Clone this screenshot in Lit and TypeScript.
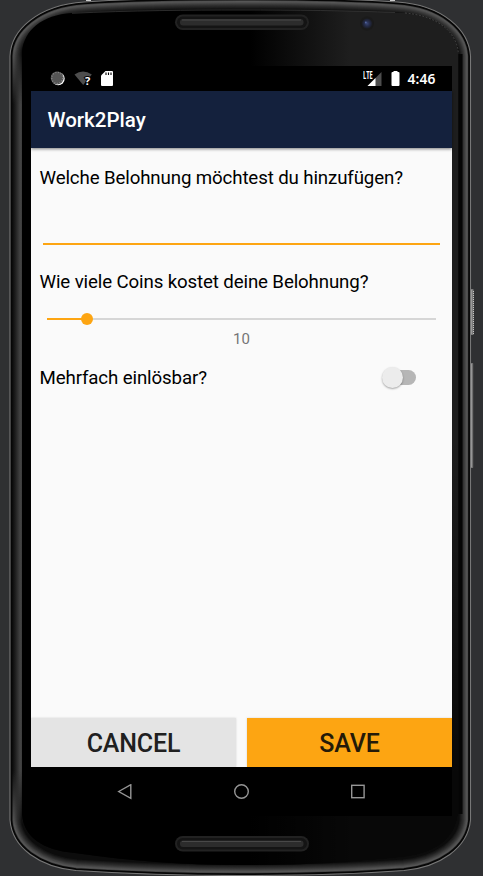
import { LitElement, html, svg, css } from "lit";
import { customElement, property } from "lit/decorators.js";

const OUTER =
  "M10 56C11 30 38 5 84 2C135 -1.5 190 -2 241 -2S346 -1.5 397 2C443 5 469 30 470.500 56V820C468 848 440 867 404 870.500C350 874.500 300 875.500 241 875.500S130 874 76 870.500C40 867 12 848 10 820Z";
const INNER =
  "M22 52C24 30 42 15 72 13C130 10.500 190 10 241 10S350 10 405 13C438 16 457 32 458.500 54V812C456 838 437 853 405 857C350 863 300 865 241 865S130 861 75 853C42 850 24 837 22 814Z";

// Bezel shading, from the inner rim outwards: stroke width and colour.
const BANDS: [number, string][] = [
  [22, "#151515"],
  [20, "#1e1e1e"],
  [18, "#262626"],
  [16, "#2e2e2e"],
  [14, "#383838"],
  [12, "#434343"],
  [10, "#4e4e4e"],
  [8, "#565656"],
  [6, "#444"],
  [4.6, "#060606"],
];

@customElement("device-frame")
class DeviceFrame extends LitElement {
  static styles = css`
    :host { display: block; }
    svg { display: block; width: 483px; height: 876px; }
  `;
  render() {
    const grille = (y: number) => svg`
      <rect x="175" y=${y} width="134" height="15.500" rx="7.700" fill="#222"/>
      <rect x="177" y=${y + 2} width="130" height="11.500" rx="5.700" fill="#141414"/>
      <rect x="180" y=${y + 4.5} width="123.500" height="6.500" rx="3" fill="#2c2c2c"/>
      <path d=${`M182 ${y + 5.5}H301`} stroke="#484848" stroke-width="1"/>`;
    return html`<svg viewBox="0 0 483 876">
      <defs>
        <clipPath id="body"><path d=${OUTER}/></clipPath>
        <linearGradient id="left" gradientUnits="userSpaceOnUse" x1="12" y1="0" x2="23" y2="0">
          <stop offset="0" stop-color="#080808"/>
          <stop offset=".3" stop-color="#1e1e1e"/>
          <stop offset=".75" stop-color="#444"/>
          <stop offset="1" stop-color="#363636"/>
        </linearGradient>
        <linearGradient id="ends" x1="0" y1="0" x2="0" y2="1">
          <stop offset="0" stop-color="#fff" stop-opacity="0"/>
          <stop offset=".07" stop-color="#fff"/>
          <stop offset=".93" stop-color="#fff"/>
          <stop offset="1" stop-color="#fff" stop-opacity="0"/>
        </linearGradient>
        <mask id="soft"><rect x="8" y="50" width="20" height="775" fill="url(#ends)"/></mask>
        <linearGradient id="glare" gradientUnits="userSpaceOnUse" x1="250" y1="0" x2="350" y2="0">
          <stop offset="0" stop-color="#1e1e1e" stop-opacity="0"/>
          <stop offset="1" stop-color="#1e1e1e"/>
        </linearGradient>
        <linearGradient id="fade" x1="0" y1="0" x2="0" y2="1">
          <stop offset=".5" stop-color="#000" stop-opacity="0"/>
          <stop offset=".9" stop-color="#000" stop-opacity=".75"/>
        </linearGradient>
        <linearGradient id="metal" x1="0" y1="0" x2="1" y2="0">
          <stop offset="0" stop-color="#aaa"/>
          <stop offset="1" stop-color="#484848"/>
        </linearGradient>
        <radialGradient id="lens">
          <stop offset="0" stop-color="#3a4675"/>
          <stop offset=".5" stop-color="#252c4a"/>
          <stop offset="1" stop-color="#1a1b20"/>
        </radialGradient>
      </defs>
      <rect width="483" height="876" fill="#2f3032"/>
      <path d=${OUTER} fill="#0c0c0c"/>
      <g clip-path="url(#body)" fill="none">
        ${BANDS.map(([w, c]) => svg`<path d=${OUTER} stroke=${c} stroke-width=${w}/>`)}
      </g>
      <rect x="12" y="50" width="11" height="775" fill="url(#left)" mask="url(#soft)"/>
      <path d=${OUTER} fill="none" stroke="#777" stroke-width="1.100"/>
      <path d=${INNER} fill="#000"/>
      <path d=${INNER} fill="url(#glare)"/>
      <path d=${INNER} fill="url(#fade)"/>
      <path d="M72 13.300C130 10.500 190 10 241 10S350 10.500 395 12.500" fill="none" stroke="#3c3c3c" stroke-width=".700"/>
      <path d="M405 13C438 16 457 32 458.500 54" fill="none" stroke="#484848" stroke-width=".800" stroke-dasharray="2 1.500"/>
      <path d="M460.500 54V814" stroke="#050505" stroke-width="4"/>
      <path d="M86 .5H91M390 .5H395" stroke="#ccc"/>
      ${grille(14.5)}${grille(836)}
      <circle cx="367" cy="23.500" r="7" fill="#1a1a1a"/>
      <circle cx="367" cy="23.500" r="5.300" fill="url(#lens)"/>
      <circle cx="365.800" cy="22.500" r=".9" fill="#5365a0"/>
      <rect x="471" y="289" width="3" height="46" rx="1" fill="url(#metal)"/>
      <path d="M473.500 291V334" stroke="#c5c5c5" stroke-dasharray="1 1"/>
      <rect x="471" y="363" width="2.500" height="105" rx="1" fill="url(#metal)"/>
    </svg>`;
  }
}

@customElement("status-bar")
class StatusBar extends LitElement {
  static styles = css`
    :host { display: flex; align-items: center; height: 25px; flex: none; background: #000; color: #fff; box-sizing: border-box; padding: 0 16px 0 18px; }
    svg { display: block; flex: none; }
    .gap { flex: 1; }
    .wifi { margin-left: 8px; }
    .card { margin-left: 8px; }
    .battery { margin: 0 8px 0 8.500px; }
    .time { font: 600 13.800px/25px "Noto Sans", "Open Sans", sans-serif; width: 28.500px; white-space: nowrap; letter-spacing: .1px; }
    .lte { font: 700 10.500px "Open Sans", sans-serif; fill: #fff; }
    .mark { font: 700 11px "Open Sans", sans-serif; fill: #fff; stroke: #000; stroke-width: 2px; paint-order: stroke; }
  `;
  render() {
    return html`
      <svg width="17" height="25" viewBox="0 0 17 25">
        <circle cx="9.200" cy="12.700" r="6.500" fill="#fff"/>
        <circle cx="8.200" cy="11.900" r="6.500" fill="#555"/>
        <circle cx="8.200" cy="11.900" r="5.500" fill="none" stroke="#888" stroke-width="1.300" stroke-dasharray="1 1.600"/>
      </svg>
      <svg class="wifi" width="19" height="25" viewBox="0 0 19 25">
        <path d="M.5 8.500Q9 2.500 17.800 8.500L9.200 19Z" fill="#4d4d4d"/>
        <text class="mark" x="11" y="18.500">?</text>
      </svg>
      <svg class="card" width="13" height="25" viewBox="0 0 13 25">
        <path d="M4.500 5H11Q12 5 12 6V19Q12 20 11 20H1Q0 20 0 19V9.500Z" fill="#fff"/>
        <path d="M5 6.500V9M7.500 6.500V9M10 6.500V9" stroke="#000" stroke-width="1.100"/>
      </svg>
      <span class="gap"></span>
      <svg width="19" height="25" viewBox="0 0 19 25">
        <path d="M4.500 20L18.500 6V20Z" fill="#4d4d4d"/>
        <path d="M4.500 20L12.500 12V20Z" fill="#fff"/>
        <text class="lte" x="0" y="12.500" textLength="9.800" lengthAdjust="spacingAndGlyphs">LTE</text>
      </svg>
      <svg class="battery" width="9" height="25" viewBox="0 0 9 25">
        <path d="M2.500 5H6.500V6H7.500Q8.500 6 8.500 7V19Q8.500 20 7.500 20H1.500Q.5 20 .5 19V7Q.5 6 1.500 6H2.500Z" fill="#fff"/>
      </svg>
      <span class="time">4:46</span>`;
  }
}

@customElement("reward-slider")
class RewardSlider extends LitElement {
  @property({ type: Number }) value = 10;
  static styles = css`
    :host { display: block; }
    .track { display: flex; align-items: center; height: 12px; }
    .done { height: 2px; background: #fda512; }
    .thumb { width: 12px; height: 12px; border-radius: 50%; background: #fda512; margin: 0 -6px; z-index: 1; }
    .rest { flex: 1; height: 2px; background: #d6d6d6; }
    .value { text-align: center; font: 15px/18px Roboto, sans-serif; color: #757575; margin-top: 5px; }
  `;
  render() {
    return html`
      <div class="track">
        <div class="done" style="width:${this.value * 1.03}%"></div>
        <div class="thumb"></div>
        <div class="rest"></div>
      </div>
      <div class="value">${this.value}</div>`;
  }
}

@customElement("app-root")
class AppRoot extends LitElement {
  static styles = css`
    :host { display: block; position: relative; width: 483px; height: 876px; overflow: hidden; font-family: Roboto, sans-serif; }
    device-frame { position: absolute; inset: 0; }
    .screen { position: relative; display: flex; flex-direction: column; margin: 66px 0 0 31px; width: 421px; height: 750px; background: #fafafa; }
    .appbar { height: 57px; flex: none; box-sizing: border-box; background: #14213d; color: #fff; font-size: 20.500px; line-height: 57px; padding-top: 1px; font-weight: 500; padding-left: 16.500px; box-shadow: 0 1px 3px rgba(0, 0, 0, .5); }
    .form { flex: 1; display: flex; flex-direction: column; padding: 18px 9px 0 8.500px; }
    .label { font-size: 18.700px; line-height: 24px; letter-spacing: -.130px; color: #000; white-space: nowrap; }
    .input { height: 53px; margin: 0 3px 0 3.500px; border-bottom: 2px solid #fda512; }
    .coins { margin-top: 25px; }
    reward-slider { margin: 19px 7px 0 7.500px; }
    .row { display: flex; justify-content: space-between; align-items: center; margin-top: 17px; height: 25px; }
    .switch { display: flex; align-items: center; width: 34px; height: 24px; margin-right: 27px; }
    .knob { width: 21px; height: 21px; flex: none; border-radius: 50%; background: #ececec; box-shadow: 0 1px 2px rgba(0, 0, 0, .35); z-index: 1; }
    .rail { flex: 1; height: 15px; margin-left: -12px; border-radius: 8px; background: #b6b6b6; }
    .actions { display: flex; gap: 11px; height: 49px; flex: none; }
    .button { flex: 1; font-size: 25px; line-height: 51px; font-weight: 500; text-align: center; color: #202020; background: #e4e4e4; box-shadow: 0 0 2px rgba(0, 0, 0, .15); letter-spacing: -.150px; }
    .save { background: #fda512; color: #241a08; }
    .nav { display: flex; align-items: center; justify-content: space-between; height: 49px; flex: none; background: #000; padding: 0 86px; box-sizing: border-box; z-index: 1; }
    .nav svg { fill: none; stroke: #969696; stroke-width: 1.400; }
  `;
  render() {
    return html`
      <device-frame></device-frame>
      <div class="screen">
        <status-bar></status-bar>
        <div class="appbar">Work2Play</div>
        <div class="form">
          <div class="label">Welche Belohnung möchtest du hinzufügen?</div>
          <div class="input"></div>
          <div class="label coins">Wie viele Coins kostet deine Belohnung?</div>
          <reward-slider></reward-slider>
          <div class="row">
            <div class="label">Mehrfach einlösbar?</div>
            <div class="switch"><div class="knob"></div><div class="rail"></div></div>
          </div>
        </div>
        <div class="actions">
          <div class="button">CANCEL</div>
          <div class="button save">SAVE</div>
        </div>
        <div class="nav">
          <svg width="16" height="16" viewBox="0 0 16 16"><path d="M1.700 7.500L13.800 .7V14.300Z"/></svg>
          <svg width="16" height="16" viewBox="0 0 16 16"><circle cx="7.500" cy="7.500" r="6.800"/></svg>
          <svg width="16" height="16" viewBox="0 0 16 16"><rect x="1.700" y="1.300" width="12.400" height="12.400"/></svg>
        </div>
      </div>`;
  }
}
